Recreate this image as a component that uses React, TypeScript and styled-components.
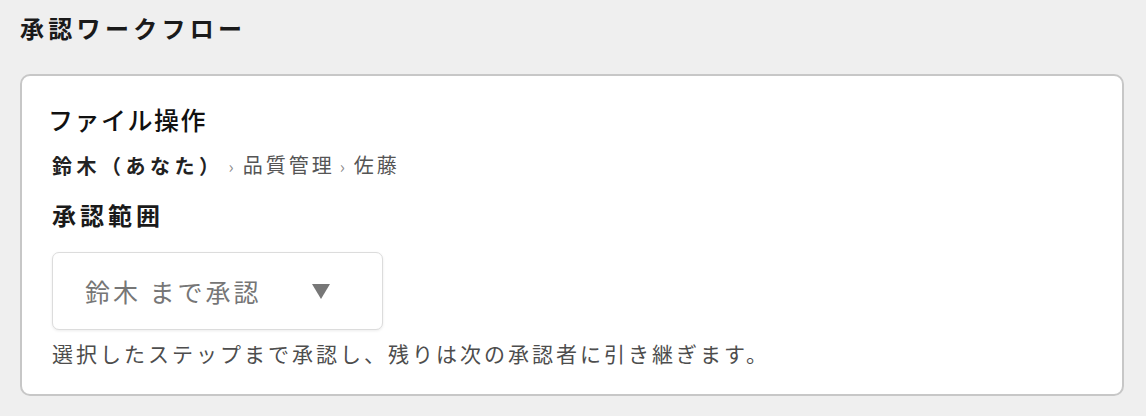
import styled, { createGlobalStyle } from "styled-components";

const GlobalStyle = createGlobalStyle`
    html, body {
        margin: 0;
        padding: 0;
        background-color: #efefef;
    }

    body {
        font-family: "Noto Sans CJK JP", "Noto Sans", sans-serif;
        color: #1d1d1d;
    }
`;

const Page = styled.div`
    padding: 11px 22px 20px 20px;
`;

const PageTitle = styled.h2`
    margin: 0 0 29px 0;
    font-size: 24px;
    font-weight: 700;
    line-height: 34px;
    letter-spacing: 4.3px;
    color: #1a1a1a;
`;

const Card = styled.section`
    background-color: #ffffff;
    border: 2px solid #c7c7c7;
    border-radius: 10px;
    padding: 25px 26px 26px 30px;
`;

const CardTitle = styled.h3`
    margin: 0 0 0 -4px;
    font-size: 25px;
    font-weight: 500;
    line-height: 36px;
    letter-spacing: 1.5px;
    color: #111;
`;

const Breadcrumb = styled.div`
    display: flex;
    align-items: center;
    margin-top: 13px;
    font-size: 20px;
    line-height: 30px;
    letter-spacing: 3px;
    color: #555;
`;

const Step = styled.span<{ $current?: boolean }>`
    font-weight: ${(props) => (props.$current ? 700 : 400)};
    letter-spacing: ${(props) => (props.$current ? "4.5px" : "3px")};
    color: ${(props) => (props.$current ? "#222" : "#555")};
`;

const Chevron = styled.span`
    font-size: 17px;
    color: #8a8a8a;
    margin: 0 9px 0 5px;
    letter-spacing: 0;
`;

const SectionLabel = styled.h4`
    margin: 17px 0 0 0;
    font-size: 24px;
    font-weight: 700;
    line-height: 34px;
    letter-spacing: 4px;
    color: #1a1a1a;
`;

const Select = styled.div`
    display: flex;
    align-items: center;
    width: 331px;
    height: 78px;
    box-sizing: border-box;
    margin-top: 20px;
    padding: 0 52px 0 32px;
    border: 1px solid #dcdcdc;
    border-radius: 7px;
    box-shadow: 0 1px 3px rgba(0, 0, 0, 0.08);
    background-color: #fff;
    color: #767676;
    font-size: 25px;
`;

const SelectValue = styled.span`
    flex: 1;
    letter-spacing: 3px;
`;

const Caret = styled.span`
    width: 0;
    height: 0;
    border-left: 9px solid transparent;
    border-right: 9px solid transparent;
    border-top: 15px solid #777;
`;

const HelpText = styled.p`
    margin: 8px 0 0 0;
    font-size: 21px;
    line-height: 30px;
    letter-spacing: 3px;
    color: #4d4d4d;
`;

function App() {
    const steps = ["品質管理", "佐藤"];

    return (
        <>
            <GlobalStyle />
            <Page>
                <PageTitle>承認ワークフロー</PageTitle>
                <Card>
                    <CardTitle>ファイル操作</CardTitle>
                    <Breadcrumb>
                        <Step $current>鈴木（あなた）</Step>
                        {steps.map((name) => (
                            <span key={name}>
                                <Chevron>›</Chevron>
                                <Step>{name}</Step>
                            </span>
                        ))}
                    </Breadcrumb>
                    <SectionLabel>承認範囲</SectionLabel>
                    <Select>
                        <SelectValue>鈴木 まで承認</SelectValue>
                        <Caret />
                    </Select>
                    <HelpText>選択したステップまで承認し、残りは次の承認者に引き継ぎます。</HelpText>
                </Card>
            </Page>
        </>
    );
}

export default App;
